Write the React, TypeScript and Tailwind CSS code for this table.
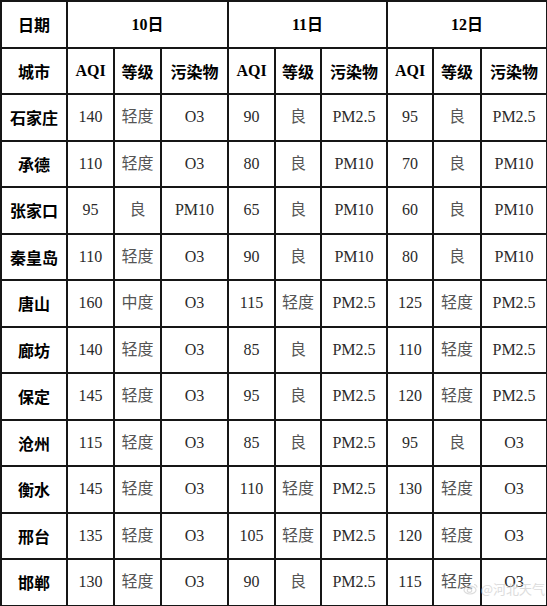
import React from "react";

const rows: [string, string[]][] = [
  ["石家庄", ["140", "轻度", "O3", "90", "良", "PM2.5", "95", "良", "PM2.5"]],
  ["承德", ["110", "轻度", "O3", "80", "良", "PM10", "70", "良", "PM10"]],
  ["张家口", ["95", "良", "PM10", "65", "良", "PM10", "60", "良", "PM10"]],
  ["秦皇岛", ["110", "轻度", "O3", "90", "良", "PM10", "80", "良", "PM10"]],
  ["唐山", ["160", "中度", "O3", "115", "轻度", "PM2.5", "125", "轻度", "PM2.5"]],
  ["廊坊", ["140", "轻度", "O3", "85", "良", "PM2.5", "110", "轻度", "PM2.5"]],
  ["保定", ["145", "轻度", "O3", "95", "良", "PM2.5", "120", "轻度", "PM2.5"]],
  ["沧州", ["115", "轻度", "O3", "85", "良", "PM2.5", "95", "良", "O3"]],
  ["衡水", ["145", "轻度", "O3", "110", "轻度", "PM2.5", "130", "轻度", "O3"]],
  ["邢台", ["135", "轻度", "O3", "105", "轻度", "PM2.5", "120", "轻度", "O3"]],
  ["邯郸", ["130", "轻度", "O3", "90", "良", "PM2.5", "115", "轻度", "O3"]],
];

const widths = [66, 47, 47, 67, 47, 46, 66, 46, 48, 66];

const serif = "font-['Liberation_Serif','Noto_Sans_CJK_SC',serif]";
const cjk = "font-['Noto_Sans_CJK_SC',sans-serif]";
const cell = "border-2 border-[#161616] text-center align-middle p-0";

export default function App() {
  return (
    <div className="relative w-[547px] h-[606px] bg-white overflow-hidden">
      <table className="table-fixed border-collapse w-[546px]">
        <colgroup>
          {widths.map((w, i) => (
            <col key={i} style={{ width: w }} />
          ))}
        </colgroup>
        <tbody>
          <tr className="h-[46.5px]">
            <td className={`${cell} ${cjk} font-bold text-[16px] text-black`}>日期</td>
            {["10", "11", "12"].map((d) => (
              <td key={d} colSpan={3} className={`${cell} text-[16px] font-bold text-black`}>
                <span className="font-['Liberation_Serif',serif]">{d}</span>
                <span className={cjk}>日</span>
              </td>
            ))}
          </tr>
          <tr className="h-[46.5px]">
            <td className={`${cell} ${cjk} font-bold text-[16px] text-black`}>城市</td>
            {[0, 1, 2].map((g) => (
              <React.Fragment key={g}>
                <td className={`${cell} font-['Liberation_Serif',serif] font-bold text-[16px] text-black`}>AQI</td>
                <td className={`${cell} ${cjk} font-bold text-[16px] text-black`}>等级</td>
                <td className={`${cell} ${cjk} font-bold text-[16px] text-black`}>污染物</td>
              </React.Fragment>
            ))}
          </tr>
          {rows.map(([city, vals]) => (
            <tr key={city} className="h-[46.5px]">
              <td className={`${cell} ${cjk} font-bold text-[16px] text-black`}>{city}</td>
              {vals.map((v, i) => (
                <td
                  key={i}
                  className={`${cell} ${serif} text-[16px] ${i % 3 === 1 ? "text-[#555]" : "text-[#2a2a2a]"}`}
                >
                  {v}
                </td>
              ))}
            </tr>
          ))}
        </tbody>
      </table>
      {/* weibo watermark */}
      <div className="absolute right-[2px] bottom-[8px] flex items-center gap-[2px] text-[13px] text-[#d4d4d4] font-['Noto_Sans_CJK_SC',sans-serif] opacity-80 pointer-events-none">
        <svg width="16" height="13" viewBox="0 0 16 13" fill="none" stroke="#d4d4d4" strokeWidth="1.2">
          <ellipse cx="7" cy="8" rx="6" ry="4" />
          <ellipse cx="6.5" cy="8.5" rx="2.2" ry="1.8" />
          <path d="M11 2.5a3 3 0 0 1 3 3" />
        </svg>
        <span>@河北天气</span>
      </div>
    </div>
  );
}
